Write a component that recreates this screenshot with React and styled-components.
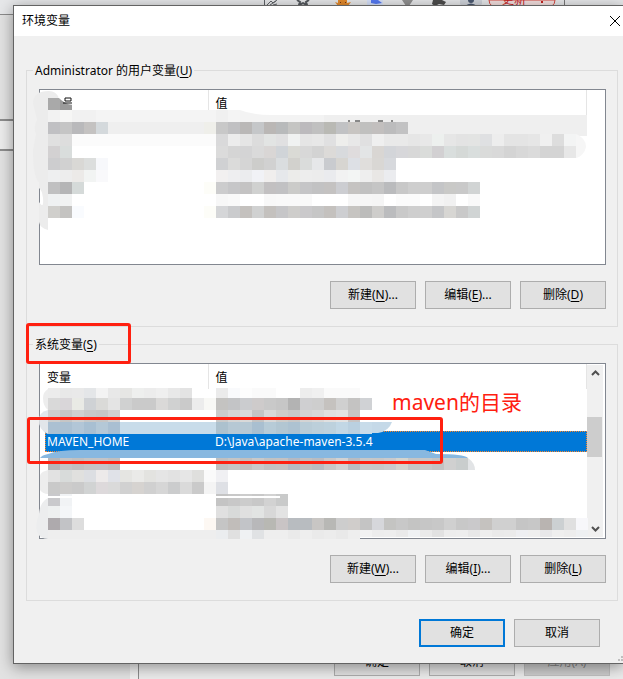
import styled, {createGlobalStyle, css} from "styled-components";

const GlobalStyle = createGlobalStyle`
  * {
    box-sizing: border-box;
  }
  body {
    margin: 0;
    font-family: "Noto Sans", "Noto Sans CJK SC", sans-serif;
    font-size: 12px;
    line-height: 16px;
    color: #000;
    background-color: #e2e2e2;
  }
`;

const Desktop = styled.div`
  position: relative;
  min-height: 100vh;
  overflow: hidden;
  padding: 5px 0 15px 13px;
`;

const BrowserWindow = styled.div`
  position: absolute;
  top: 0;
  left: 0;
  right: 0;
  height: 15px;
  border-bottom: 1px solid #8a8a8a;
  background-color: #e6e7e9;
`;

const BrowserIcons = styled.svg`
  position: absolute;
  top: 0;
  left: 264px;
`;

const UpdateLabel = styled.span`
  position: absolute;
  top: -8px;
  left: 502px;
  color: #c5221f;
`;

const SidePanel = styled.div`
  position: absolute;
  top: 119px;
  left: 0;
  width: 14px;
  height: 32px;
  border: 2px solid #8c8c8c;
  border-width: 2px 0;
  background-color: #ececec;
`;

const BackWindow = styled.div`
  position: absolute;
  bottom: 0;
  left: 130px;
  right: 0;
  height: 40px;
  padding: 9px 13px 3px 0;
  display: flex;
  justify-content: flex-end;
  gap: 9px;
  background: linear-gradient(to right, #f0f0f0 8px, #8c8c8c 8px, #8c8c8c 9px, #ebebeb 9px);
`;

const Dialog = styled.main`
  position: relative;
  border: 1px solid #636363;
  border-right: 0;
  background-color: #f0f0f0;
  box-shadow: 0 3px 14px rgba(0, 0, 0, 0.4);
`;

const TitleBar = styled.header`
  display: flex;
  align-items: center;
  justify-content: space-between;
  height: 30px;
  padding: 0 2px 0 8px;
  background-color: #fff;
`;

const Title = styled.h1`
  margin: 0;
  font-size: 12px;
  font-weight: 400;
`;

const CloseBtn = styled.button`
  display: flex;
  padding: 0;
  border: 0;
  background: none;
`;

const Content = styled.div`
  display: flex;
  flex-direction: column;
  gap: 8px;
  padding: 25px 5px 0 12px;
`;

const Group = styled.fieldset`
  position: relative;
  min-width: 0;
  height: 266px;
  margin: 0;
  padding: 10px 11px 0 12px;
  border: 1px solid #dcdcdc;
`;

const Legend = styled.legend`
  height: 18px;
  margin-left: -6px;
  padding: 2px 2px 0;
  u {
    text-underline-offset: 2px;
  }
`;

const ListView = styled.div`
  position: relative;
  height: 176px;
  border: 1px solid #828790;
  background-color: #fff;
  display: flex;
`;

const Table = styled.table`
  flex: 1;
  align-self: flex-start;
  min-width: 0;
  margin-left: 5px;
  border-collapse: collapse;
  table-layout: fixed;
`;

const Th = styled.th`
  width: ${(props) => props.width || "auto"};
  height: 25px;
  padding: 2px 0 0 ${(props) => props.indent || "2px"};
  border-right: 1px solid #e5e5e5;
  text-align: left;
  font-weight: 400;
`;

const Row = styled.tr`
  height: 21px;
  ${(props) => props.active && css`
    color: #fff;
    background-color: #0078d7;
    outline: 1px dotted #ff8728;
    outline-offset: -1px;
  `}
  ${(props) => props.muted && css`
    background-color: #efefef;
  `}
`;

const Td = styled.td`
  height: 21px;
  padding: 0 0 0 ${(props) => props.indent || "2px"};
`;

const Gutter = styled.div`
  width: 18px;
`;

const ScrollBar = styled.div`
  display: flex;
  flex-direction: column;
  width: 16px;
  margin: 1px 2px 1px 0;
  background-color: #f0f0f0;
`;

const ScrollBtn = styled.button`
  display: flex;
  align-items: center;
  justify-content: center;
  height: 17px;
  padding: 0;
  border: 0;
  background: none;
`;

const ScrollTrack = styled.div`
  flex: 1;
  padding-top: 35px;
`;

const ScrollThumb = styled.div`
  width: 15px;
  height: 40px;
  background-color: #cdcdcd;
`;

const Censor = styled.svg`
  position: absolute;
  top: 0;
  left: 0;
  overflow: visible;
  pointer-events: none;
`;

const Buttons = styled.div`
  display: flex;
  justify-content: flex-end;
  gap: 9px;
  padding-top: 16px;
`;

const Button = styled.button`
  width: 86px;
  height: 28px;
  padding: 0;
  border: ${(props) => (props.primary ? "2px solid #0078d7" : "1px solid #adadad")};
  background-color: #e1e1e1;
  font: inherit;
  color: #000;
  u {
    text-underline-offset: 2px;
  }
  &:disabled {
    border-color: #bfbfbf;
    background-color: #cccccc;
    color: #838383;
  }
`;

const Footer = styled.footer`
  padding: 18px 23px 16px 0;
  ${Buttons} {
    padding-top: 0;
  }
`;

const Grip = styled.svg`
  position: absolute;
  right: 0;
  bottom: 2px;
`;

const Mark = styled.div`
  position: absolute;
  border: 3px solid #ff2010;
  border-radius: 3px;
  pointer-events: none;
`;

const LegendMark = styled(Mark)`
  top: -30px;
  left: -1px;
  width: 105px;
  height: 41px;
`;

const RowMark = styled(Mark)`
  top: 53px;
  left: -13px;
  width: 416px;
  height: 47px;
`;

const Note = styled.div`
  position: absolute;
  top: 24px;
  left: 352px;
  font-size: 21px;
  line-height: 28px;
  color: #ff2010;
`;

const CELL = 12;

// x, y, colours of a run of cells, height; two digits stand for a grey
const userCells = [
  [8, 8, "a9 9b"],
  [8, 20, "f2 f6f6f5 f1 f1 f4 f4 f4 f4 f4 f4 f4 f4 f4 f4 f0 f4"],
  [8, 32, "c0c0c3 c5c5c5 b9b9bb c4c2c1 d4d9dc"],
  [164, 32, "efefea c8 c0c0c2 bab8b7 c5c7c9 bab7b5 b8babb c5c5c3 bcbabd c0 b9b9b4 c1c2c4 c8c5c2 c0c0bf c2bfbe bcbcbd c2c2c3"],
  [8, 44, "e0 dd fb fb fb fb fb fb fb fb fb fb fb fb d9d9da ec e5 dc e2e4e3 e0e0e1 f0f2f1 e5 e7 e0e0e1 eeeeec e8 e0e0e1 ef e9 e9 e6 e8 edf0ee e6 e3 e3e4e3 dfe0e2 ed e4 e4 e6 f0 dd f3f4f4"],
  [8, 56, "d3d1d2 d9dddc"],
  [176, 56, "db d5 d4d4d5 da d9d6d5 d0d4d8 dadad5 d8 d3 dcdad8 d8dadd dfdcdd e3e5e6 d9d6d3 d3d5d9 d7d7da d8 dadcda d2d0d2 d9dedd d5d9d7 d9dedd dadbda d9 d4 d8 db d4 d4 e7"],
  [8, 68, "cdcdcf d1 d9d8d5 dcdedd f7f8fb"],
  [176, 68, "d0d1d3 dbdbda d5 cdcdcb d1 dadddf d2d1cd dadcdb e6e7e9 c9cbcf d7d5d1 dde0e5 e0dedc d9d7d4 d7d9dd"],
  [8, 80, "eeeff0 ed eceae8 f2f4f3 f9f9fb"],
  [176, 80, "f2f0f0 eeeef0 ebecee f1f2f6 f0eeed e6e8eb ececea ed ec eaebee f2 f3f5f4 ee e9e7e5 ebecef"],
  [8, 92, "c0c0c1 b5b5b6 d5dad9"],
  [164, 92, "fdfdf8 cccccd c6c6c8 c4c3c3 d0d1d0 c2c0c1 c1c1c3 cbcbc9 c5c5c7 c2c2c3 c4c2c1 cccdd1 c5c3c1 c1 c5 babbbd c8 ce ce c4c5c7 c9c9c7 c9 d1d4d4"],
  [8, 104, "eff1f2 f1f2f2"],
  [176, 104, "f7 f9 ff ff f8 f9 f9 f9 ff ff ff f6 f6 f5 ff fb fb ff f4 f1 ff f9"],
  [8, 116, "d0cfcc c4c3c1 f9fbfe"],
  [164, 116, "fdfdf8 d5d6d8 cacbcd c4c1be d0d1d1 c4c1be c6c6c8 cecdcb cac9cb c6 c4c1be cdced1 c6c4c1 bcbcbb cecdcb bbbcbe c9 ce cf c5c6c8 d7d6d3 c9 d0d4d4"],
];

const systemCells = [
  [8, 24, "ec e8 e9 e4e6e8 f3 e8 e6e6e4 eeefee ec ef e8 e3", 10],
  [176, 24, "eb f9fafc fd fa fa ff ff ed f0 fa fa fa", 10],
  [8, 34, "d9 d9d6d9 e9eae5 cfd2d5 dadad8 e4 d0d1d1 ca ca dad9d8 d0d1d1 ca ec f8f8f5 c4c3c1 c3c4c6 cbcccf cecbcb c9 c6 b3 cfcfd1 ce c5c2bf d0 c4c3c2 d0d2d5"],
  [8, 46, "ce c6 d0 c8 c6 d1"],
  [176, 46, "cb d5 d9 c4 d8 cecdcb c8 d4 d8 e0 e3 c8c5c5"],
  [8, 58, "abc0d2 abc0d2 b2c6d7 a8bfd2 b4c8d7 a9bfd2 c8dcea c8dcea c8dcea c8dcea c8dcea c8dcea c8dcea c8dcea acc1ce b6c8d4 b6c8d4 a9bfd0 b7cbd7 b2c6d2 adc2d1 b9ccd7 bccfda bdd1dd c2d7e5 bad0e0 c8dcea"],
  [8, 94, "b5b5b8 c4c4c5 c0 c4 c4c4c7 c0"],
  [176, 94, "c0 c5 c3c0be c9 c2 c5c2c2 b5b9c2 c0 b9bcc1 c8 d2 b9bcc1 c8 c7 cacacc d4d4ce c5 c8 c3 d0 c9cdcd"],
  [8, 106, "e2 d8dbda e0e0de dcdee2 edeaea e0e2e8 e5e5e2 eaeae8 e3e3e0 e5 e2 e6 dfdfdd fa f0f0f3"],
  [8, 118, "c9 cdcccb ca d1d3d3 ddd9db da d1 d6d3d0 d0 d6 cbcccd da ca f4 dee0e5"],
  [8, 130, "c9c9cc f1f3f5"],
  [176, 130, "c4 c8 cc c8 d2 c9caca"],
  [8, 142, "eef0f0 f4f6f8"],
  [176, 142, "e0 d8dad9 e0 e2e4e3 d8 e3"],
  [8, 154, "aeaaad c2c3c6 dd"],
  [164, 154, "fdf8f3 c5 c1bdba c2c4c8 b8b8ba b8b8b3 c9c4c5 b8bcc0 b8bcc0 c8c6c4 b8b8b5 cd d0cdcb c4 d6d7db c4c4c2 c8 c4c4c3 c6 c8 d0 c8 cac9cb c5c2bf d0 d0 c5 c7 b9b4b1 ccd0d2 e0 f7f7fa"],
  [8, 166, "ee ee ee ee ee ee ee ee ee ee ee ee ee ee ebedef e0 eff1f3 e0e2e4 ee ee ea ee ea ec e9 ee", 9],
  [320, 166, "f2 ed ee ea f0f2f4 ea e2 ed ee e8 ee ea eb eeeff2 ef e8e8ea ef ed eef0f2", 7],
];

function Mosaic({runs, children}) {
  return (
    <Censor width="566" height="176" aria-hidden="true" shapeRendering="crispEdges">
      {runs.map(([x, y, colors, height = CELL]) =>
        colors.split(" ").map((c, i) => (
          <rect
            key={`${x}-${y}-${i}`}
            x={x + i * CELL}
            y={y}
            width={CELL}
            height={height}
            fill={`#${c.length === 2 ? c + c + c : c}`}
          />
        ))
      )}
      {children}
    </Censor>
  );
}

function Actions({keys}) {
  return (
    <Buttons>
      <Button type="button">新建(<u>{keys[0]}</u>)...</Button>
      <Button type="button">编辑(<u>{keys[1]}</u>)...</Button>
      <Button type="button">删除(<u>{keys[2]}</u>)</Button>
    </Buttons>
  );
}

function HeadRow() {
  return (
    <thead>
      <tr>
        <Th width="163px">变量</Th>
        <Th indent="7px">值</Th>
      </tr>
    </thead>
  );
}

function App() {
  return (
    <>
      <GlobalStyle />
      <Desktop>
        <BrowserWindow>
          <BrowserIcons width="310" height="6" viewBox="0 0 310 6">
            <path d="M0.500 0V6M3 5L7 1L9 3L13 0M6 5L12 1M9 5L13 4" fill="none" stroke="#5f6368" />
            <path d="M33 0L36 2L35 5L39 3L43 5L42 2L45 0" fill="none" stroke="#55595e" strokeWidth="2" />
            <path d="M71 2L74 3V0H83V3L87 2L84 6H74Z" fill="#e38a2c" />
            <path d="M76 2h1v1h-1zM81 2h1v1h-1z" fill="#7b3912" />
            <path d="M103 0H119V6H103Z" fill="#d5e0fa" />
            <path d="M107 0H114L118 3L112 4L107 3Z" fill="#5579f2" />
            <path d="M138 0H149L145 6H142Z" fill="#909090" />
            <path d="M169 0H178L182 2L180 5L175 4L171 6L168 4Z" fill="#4d4d4d" />
            <path d="M196 0H218V4L216 6H198L196 4Z" fill="#cfd3da" />
            <circle cx="207" cy="0" r="3" fill="#4a5870" />
            <path d="M201 6Q207 1 213 6Z" fill="#4a5870" />
            <path d="M225 0Q225 4 228 6H288Q291 4 291 0Z" fill="#f3dfde" stroke="#d4473f" />
            <path d="M277 1h2v2h-2z" fill="#c5221f" />
            <path d="M300.500 0V6" stroke="#777" />
          </BrowserIcons>
          <UpdateLabel>更新</UpdateLabel>
        </BrowserWindow>
        <SidePanel />
        <BackWindow>
          <Button type="button">确定</Button>
          <Button type="button">取消</Button>
          <Button type="button" disabled>应用(A)</Button>
        </BackWindow>
        <Dialog>
          <TitleBar>
            <Title>环境变量</Title>
            <CloseBtn type="button" aria-label="关闭">
              <svg width="12" height="12" viewBox="0 0 12 12">
                <path d="M1 1L11 11M11 1L1 11" stroke="#000" />
              </svg>
            </CloseBtn>
          </TitleBar>
          <Content>
            <Group>
              <Legend>Administrator 的用户变量(<u>U</u>)</Legend>
              <ListView>
                <Table>
                  <HeadRow />
                  <tbody>
                    <Row muted><Td /><Td /></Row>
                  </tbody>
                </Table>
                <Gutter />
                <Mosaic runs={userCells}>
                  <g shapeRendering="auto">
                    <path d="M-7 14Q-7 1 9 1Q16 1 19 8H8V140Q0 138 -1 132V112Q4 120 3 108Q2 100 -1 98V92Q-7 88 -7 60L-4 44Q-7 38 -3 30Z" fill="#ececec" />
                    <path d="M18 7H33V15Q24 14 18 7Z" fill="#fff" />
                    <path d="M25 8h6v3h-6zM23 13h9" fill="none" stroke="#111" />
                    <path d="M200 20Q212 25 232 25H284V32H200Z" fill="#f3f3f3" />
                    <path d="M536 44Q546 48 546 57Q544 66 536 68Z" fill="#f6f6f6" />
                    <path d="M308 31h2M315 31h5M338 31h5M352 30v2" fill="none" stroke="#222" />
                  </g>
                </Mosaic>
              </ListView>
              <Actions keys={["N", "E", "D"]} />
            </Group>
            <Group>
              <Legend>系统变量(<u>S</u>)</Legend>
              <ListView>
                <Table>
                  <HeadRow />
                  <tbody>
                    <Row><Td /><Td /></Row>
                    <Row><Td /><Td /></Row>
                    <Row active>
                      <Td>MAVEN_HOME</Td>
                      <Td indent="7px">D:\Java\apache-maven-3.5.4</Td>
                    </Row>
                  </tbody>
                </Table>
                <ScrollBar>
                  <ScrollBtn type="button" aria-label="向上">
                    <svg width="9" height="7" viewBox="0 0 9 7">
                      <path d="M1 5L4.500 1.500L8 5" fill="none" stroke="#505050" strokeWidth="2" />
                    </svg>
                  </ScrollBtn>
                  <ScrollTrack>
                    <ScrollThumb />
                  </ScrollTrack>
                  <ScrollBtn type="button" aria-label="向下">
                    <svg width="9" height="7" viewBox="0 0 9 7">
                      <path d="M1 2L4.500 5.500L8 2" fill="none" stroke="#505050" strokeWidth="2" />
                    </svg>
                  </ScrollBtn>
                </ScrollBar>
                <Mosaic runs={systemCells}>
                  <g shapeRendering="auto">
                    <path d="M8 25Q3 28 3 34Q3 42 8 46Z" fill="#ededed" />
                    <path d="M8 46Q0 48 -1 54Q-2 66 8 70Z" fill="#e2e6ea" />
                    <path d="M332 58H352Q349 67 338 69H332Z" fill="#c5d9e8" />
                    <path d="M8 90Q18 86 40 86H385L396 90Q424 90 428 94H0Q2 91 8 90Z" fill="#88b8e0" />
                    <path d="M428 94Q435 99 435 106H428Z" fill="#e2e4e6" />
                    <path d="M8 106Q0 108 0 112L0 126Q3 130 8 130Z" fill="#ededed" />
                    <path d="M8 134Q0 138 -1 150Q-5 160 -3 168Q0 175 8 175Z" fill="#ecedee" />
                    <path d="M0 133H240" stroke="#fff" strokeWidth="2" fill="none" />
                  </g>
                </Mosaic>
                <RowMark />
                <Note>maven的目录</Note>
              </ListView>
              <Actions keys={["W", "I", "L"]} />
              <LegendMark />
            </Group>
          </Content>
          <Footer>
            <Buttons>
              <Button type="submit" primary>确定</Button>
              <Button type="button">取消</Button>
            </Buttons>
          </Footer>
          <Grip width="5" height="5" viewBox="0 0 5 5">
            <path d="M0 3h2v2h-2zM3 3h2v2h-2zM3 0h2v2h-2z" fill="#bfbfbf" />
          </Grip>
        </Dialog>
      </Desktop>
    </>
  );
}

export default App;
